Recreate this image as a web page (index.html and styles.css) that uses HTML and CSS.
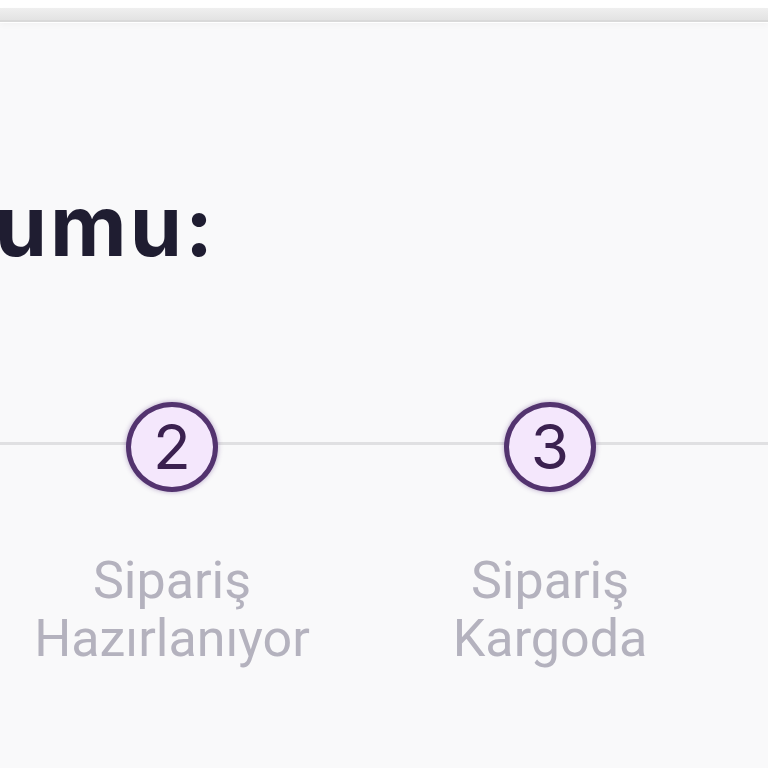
FILE: index.html
```html
<!DOCTYPE html>
<html lang="tr">
<head>
    <meta charset="utf-8">
    <title>Sipariş Durumu</title>
    <link rel="stylesheet" href="styles.css">
</head>
<body>
<div class="topbar"></div>
<div class="topbar-edge"></div>

<main class="status">
    <div class="status-title">
        <h1>Sipariş Durumu:</h1>
    </div>

    <div class="stepper">
        <div class="step">
            <div class="step-circle">1</div>
            <div class="step-label">Sipariş Alındı</div>
        </div>
        <div class="step">
            <div class="step-circle">2</div>
            <div class="step-label">Sipariş Hazırlanıyor</div>
        </div>
        <div class="step">
            <div class="step-circle">3</div>
            <div class="step-label">Sipariş Kargoda</div>
        </div>
        <div class="step">
            <div class="step-circle">4</div>
            <div class="step-label">Sipariş Teslim Edildi</div>
        </div>
    </div>
</main>
</body>
</html>
```

FILE: styles.css
```css
html, body {
    margin: 0;
    padding: 0;
}
body {
    background: #f9f9fa;
    overflow: hidden;
    font-family: Inter, "Noto Sans", sans-serif;
}

/* ust bar ve alt kenari */
.topbar {
    height: 8px;
    background: #fff;
}
.topbar-edge {
    height: 12px;
    background: linear-gradient(#efefef, #e3e3e3);
    border-bottom: 2px solid #d9d9d9;
    box-shadow: 0 1px 0 #fff, 0 3px 6px rgba(0, 0, 0, 0.03);
}

.status {
    padding-top: 162px;
}

/* baslik sola tasiyor, sadece sonu gorunuyor */
.status-title {
    width: 216px;
    display: flex;
    justify-content: flex-end;
}
.status-title h1 {
    margin: 0;
    white-space: nowrap;
    font-size: 84px;
    line-height: 1;
    font-weight: 700;
    color: #1f1d31;
    letter-spacing: 3px;
}

/* adimlar */
.stepper {
    position: relative;
    display: flex;
    margin-top: 134px;
    margin-left: -395px;
}
.stepper::before {
    content: "";
    position: absolute;
    left: 0;
    right: -400px;
    top: 40px;
    height: 3px;
    background: #e0e0e2;
}
.step {
    position: relative;
    flex: 0 0 378px;
    display: flex;
    flex-direction: column;
    align-items: center;
}
.step-circle {
    box-sizing: border-box;
    width: 92px;
    height: 90px;
    border-radius: 50%;
    border: 5px solid #53336f;
    background: #f4e7fc;
    box-shadow: 0 0 5px rgba(100, 60, 140, 0.45);
    color: #3b2150;
    font-size: 62px;
    font-weight: 400;
    display: flex;
    align-items: center;
    justify-content: center;
    line-height: 1;
}
.step-label {
    margin-top: 60px;
    width: 350px;
    text-align: center;
    font-family: Roboto, "Liberation Sans", sans-serif;
    font-size: 52px;
    line-height: 58px;
    color: #b4b2be;
}
```
